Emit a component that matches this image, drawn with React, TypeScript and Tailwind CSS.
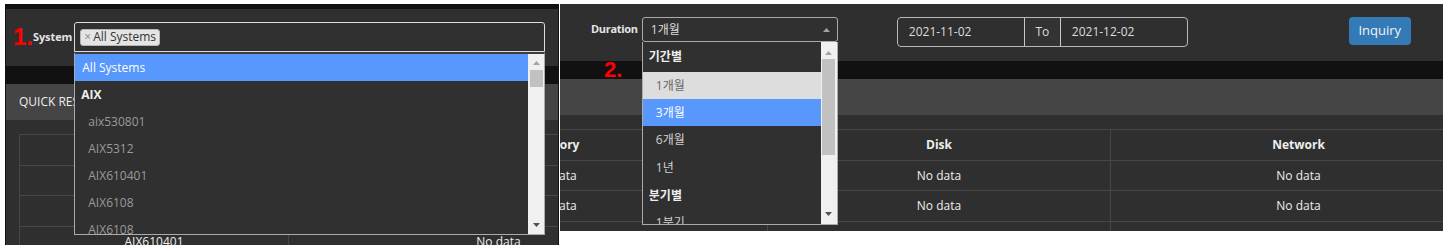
import React from "react";

const font = "font-['Open_Sans','Noto_Sans_CJK_KR',sans-serif]";

function Arrow({ up }: { up?: boolean }) {
  return (
    <svg width="7" height="4" viewBox="0 0 7 4" className="block">
      {up ? <path d="M0 4 L3.5 0 L7 4 Z" fill="#a3a3a3" /> : <path d="M0 0 L3.5 4 L7 0 Z" fill="#505050" />}
    </svg>
  );
}

function ScrollTrack({ arrowTop, thumbTop, thumbH, bottomPad }: { arrowTop: number; thumbTop: number; thumbH: number; bottomPad: number }) {
  return (
    <div className="w-[16px] shrink-0 bg-[#f0f0f0] flex flex-col items-center">
      <div style={{ marginTop: arrowTop }}>
        <Arrow up />
      </div>
      <div className="w-[13px] bg-[#c1c1c1]" style={{ marginTop: thumbTop, height: thumbH }} />
      <div className="mt-auto" style={{ marginBottom: bottomPad }}>
        <Arrow />
      </div>
    </div>
  );
}

function LeftShot() {
  const opts = ["aix530801", "AIX5312", "AIX610401", "AIX6108", "AIX6108"];
  return (
    <div className="w-[554px] h-[241px] bg-[#111] pt-[5px] flex flex-col overflow-hidden">
      {/* filter bar */}
      <div className="mx-[1px] h-[57px] bg-[#2f2f2f] flex items-start pl-[7px] pt-[13px]">
        <span className="h-[30px] flex items-center text-[24px] font-bold text-[#ff0000] font-['Liberation_Sans',sans-serif] leading-none w-[20px]">1.</span>
        <span className="h-[30px] flex items-center text-[11px] font-bold text-[#e5e5e5] tracking-[-0.1px]">System</span>
        <div className="relative ml-[2px] w-[471px] h-[30px] border border-[#dcdcdc] rounded-t-[3px] bg-[#303030] flex items-center pl-[5px]">
          <span className="h-[17px] flex items-center gap-[2px] bg-[#e4e4e4] border border-[#b5b5b5] rounded-[3px] pl-[3px] pr-[3px] text-[12px] text-[#333]">
            <span className="text-[#888] text-[12px] leading-none">×</span>All Systems
          </span>
          {/* dropdown */}
          <div className="absolute left-[-1px] top-[29px] z-10 w-[471px] h-[183px] border-t-2 border-t-[#3d3d3d] border-x border-b border-[#ababab] bg-[#303030] flex">
            <div className="flex-1 flex flex-col text-[12px]">
              <div className="h-[27px] shrink-0 flex items-center pl-[7px] bg-[#5897fb] text-white">All Systems</div>
              <div className="h-[27px] shrink-0 flex items-center pl-[6px] font-bold text-[#eee]">AIX</div>
              {opts.map((o, i) => (
                <div key={i} className="h-[27px] shrink-0 flex items-center pl-[13px] text-[#9a9a9a]">{o}</div>
              ))}
            </div>
            <ScrollTrack arrowTop={7} thumbTop={5} thumbH={17} bottomPad={7} />
          </div>
        </div>
      </div>
      <div className="h-[18px] shrink-0" />
      {/* panel header */}
      <div className="mx-[1px] h-[36px] shrink-0 bg-[#454545] flex items-center pl-[13px] text-[12px] text-[#eee]">QUICK RESULT</div>
      {/* table */}
      <div className="mx-[1px] flex-1 bg-[#2f2f2f] pt-[14px] pl-[13px] overflow-hidden">
        <div className="border-l border-[#474747] text-[12px] text-[#eee]">
          {[
            { h: 31, a: "System", b: "CPU", bold: true },
            { h: 30, a: "AIX5312", b: "No data" },
            { h: 31, a: "AIX6108", b: "No data" },
            { h: 30, a: "AIX610401", b: "No data" },
          ].map((r, i) => (
            <div key={i} className="flex border-t border-[#474747]" style={{ height: r.h }}>
              <div className={`w-[268px] shrink-0 flex items-center justify-center ${r.bold ? "font-bold" : ""}`}>{r.a}</div>
              <div className={`w-[420px] shrink-0 border-l border-[#474747] flex items-center justify-center ${r.bold ? "font-bold" : ""}`}>{r.b}</div>
            </div>
          ))}
        </div>
      </div>
    </div>
  );
}

function RightShot() {
  const items: { t: string; kind: "group" | "sel" | "hl" | "opt"; h: number }[] = [
    { t: "기간별", kind: "group", h: 30 },
    { t: "1개월", kind: "sel", h: 27 },
    { t: "3개월", kind: "hl", h: 27 },
    { t: "6개월", kind: "opt", h: 28 },
    { t: "1년", kind: "opt", h: 28 },
    { t: "분기별", kind: "group", h: 27 },
    { t: "1분기", kind: "opt", h: 27 },
  ];
  const cls = {
    group: "pl-[6px] font-bold text-[#eee]",
    sel: "pl-[13px] bg-[#dddddd] text-[#666]",
    hl: "pl-[13px] bg-[#5897fb] text-white",
    opt: "pl-[13px] text-[#d0d0d0]",
  };
  return (
    <div className="relative w-[883px] h-[227px] bg-[#111] flex flex-col overflow-hidden">
      {/* filter bar */}
      <div className="h-[57px] shrink-0 bg-[#2f2f2f] flex items-start pl-[31px] pt-[13px]">
        <span className="h-[25px] flex items-center text-[11px] font-bold text-[#e5e5e5] tracking-[-0.3px]">Duration</span>
        <div className="relative ml-[4px] w-[196px] h-[25px] border border-[#ababab] rounded-[3px] bg-[#303030] flex items-center pl-[8px] text-[12px] text-[#ddd]">
          1개월
          <div className="absolute right-[7px] top-[10px]">
            <Arrow up />
          </div>
          {/* dropdown */}
          <div className="absolute left-[-1px] top-[24px] z-10 w-[196px] h-[183px] border-x border-b border-[#ababab] bg-[#303030] flex">
            <div className="flex-1 flex flex-col text-[12px] overflow-hidden">
              {items.map((it, i) => (
                <div key={i} className={`shrink-0 flex items-center ${cls[it.kind]}`} style={{ height: it.h }}>{it.t}</div>
              ))}
            </div>
            <ScrollTrack arrowTop={9} thumbTop={4} thumbH={96} bottomPad={8} />
          </div>
        </div>
        {/* date range */}
        <div className="ml-[59px] h-[30px] flex border border-[#b8b8b8] rounded-[4px] text-[12px] text-[#ddd]">
          <div className="w-[126px] flex items-center pl-[11px]">2021-11-02</div>
          <div className="w-[37px] flex items-center justify-center border-x border-[#c8c8c8] bg-[#333]">To</div>
          <div className="w-[126px] flex items-center pl-[11px]">2021-12-02</div>
        </div>
        <button className="ml-[161px] w-[62px] h-[28px] rounded-[4px] bg-[#337ab7] text-[13px] text-[#f4f4f4] flex items-center justify-center">Inquiry</button>
      </div>
      <div className="h-[18px] shrink-0" />
      <div className="h-[36px] shrink-0 bg-[#454545]" />
      {/* table */}
      <div className="flex-1 bg-[#2f2f2f] pt-[14px] overflow-hidden">
        <div className="ml-[-218px] w-[1144px] text-[12px] text-[#eee]">
          {[
            { h: 31, c: ["Memory", "Disk", "Network"], bold: true },
            { h: 30, c: ["No data", "No data", "No data"] },
            { h: 31, c: ["No data", "No data", "No data"] },
            { h: 30, c: ["", "", ""] },
          ].map((r, i) => (
            <div key={i} className={`flex border-t border-[#474747] ${r.bold ? "font-bold" : ""}`} style={{ height: r.h }}>
              <div className="w-[425px] shrink-0 flex items-center justify-center">{r.c[0]}</div>
              <div className="w-[343px] shrink-0 border-l border-[#474747] flex items-center justify-center">{r.c[1]}</div>
              <div className="w-[376px] shrink-0 border-l border-[#474747] flex items-center justify-center">{r.c[2]}</div>
            </div>
          ))}
        </div>
      </div>
      {/* annotation */}
      <span className="absolute left-[44px] top-[55px] text-[22px] font-bold text-[#ff0000] font-['Liberation_Sans',sans-serif] leading-none">2.</span>
    </div>
  );
}

export default function App() {
  return (
    <div className={`w-[1443px] h-[245px] bg-white flex items-start pt-[4px] pl-[5px] gap-[1px] overflow-hidden ${font}`}>
      <LeftShot />
      <RightShot />
    </div>
  );
}
